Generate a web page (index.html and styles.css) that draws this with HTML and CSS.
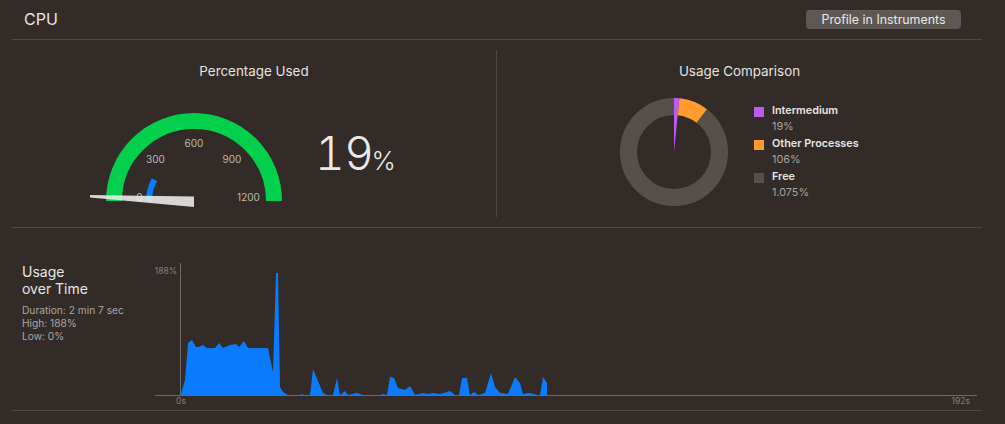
FILE: index.html
```html
<!DOCTYPE html>
<html>
<head>
<meta charset="utf-8">
<link rel="stylesheet" href="styles.css">
</head>
<body>
<div class="panel">
  <header class="head">
    <h1 class="title">CPU</h1>
    <button class="btn">Profile in Instruments</button>
  </header>

  <section class="top">
    <div class="col col-left">
      <h2 class="sub">Percentage Used</h2>
      <div class="gauge-row">
        <svg class="gauge" width="210" height="112" viewBox="0 0 210 112">
          <path d="M28 101 A80 80 0 0 1 188 101" fill="none" stroke="#02cf4c" stroke-width="16"/>
          <g class="gauge-lbl">
            <text x="53.5" y="97">0</text>
            <text x="69.5" y="59">300</text>
            <text x="108" y="43">600</text>
            <text x="146" y="59">900</text>
            <text x="162.5" y="97">1200</text>
          </g>
          <path d="M63 101 A45 45 0 0 1 68.5 79.6" fill="none" stroke="#0a7bff" stroke-width="6"/>
          <polygon points="4,95 108,96.5 108,107 4,97.5" fill="rgba(238,238,238,0.88)"/>
        </svg>
        <div class="pct">19<span class="pct-sign">%</span></div>
      </div>
    </div>
    <div class="divider"></div>
    <div class="col col-right">
      <h2 class="sub">Usage Comparison</h2>
      <div class="donut-row">
        <svg class="donut" width="120" height="120" viewBox="0 0 120 120">
          <circle cx="60" cy="60" r="45.5" fill="none" stroke="#55504c" stroke-width="17"/>
          <path d="M65.36 6.27 A54 54 0 0 1 92.87 17.16 L82.53 30.64 A37 37 0 0 0 63.67 23.18 Z" fill="#ff9a2b"/>
          <path d="M60 60 L60 6 A54 54 0 0 1 65.36 6.27 Z" fill="#bf5af2"/>
        </svg>
        <ul class="legend">
          <li class="item"><span class="sw sw-purple"></span><div><div class="lbl">Intermedium</div><div class="val">19%</div></div></li>
          <li class="item"><span class="sw sw-orange"></span><div><div class="lbl">Other Processes</div><div class="val">106%</div></div></li>
          <li class="item"><span class="sw sw-gray"></span><div><div class="lbl">Free</div><div class="val">1.075%</div></div></li>
        </ul>
      </div>
    </div>
  </section>

  <section class="time">
    <div class="info">
      <div class="info-title">Usage<br>over Time</div>
      <div class="info-meta">Duration: 2 min 7 sec<br>High: 188%<br>Low: 0%</div>
    </div>
    <svg class="chart" width="835" height="148" viewBox="150 260 835 148">
      <path fill="#0a7bff" d="M180.7 395 L185 380 L188 343 L192 340 L196 347 L199 347 L203 345 L207 348 L215 348 L219 343 L223 348 L230 345 L236 344 L239 347 L244 341 L248 348 L268 348 L273 372 L276 273 L278 273 L280 387 L283 392 L288 395 L300 395 L302 394 L304 395 L310 395 L313 369 L323 393 L327 395 L333 395 L337 378 L340 395 L345 391 L348 395 L357 393 L363 395 L380 395 L383 394 L387 395 L390 377 L394 378 L398 388 L405 390 L410 386 L415 395 L423 393 L428 394 L433 393 L440 394 L450 391 L455 395 L459 395 L462 378 L467 378 L470 395 L474 392 L478 395 L485 393 L491 373 L495 387 L500 393 L508 394 L515 377 L520 383 L523 394 L530 393 L537 395 L540 395 L543 377 L547 383 L547 395 Z"/>
      <line x1="180.5" y1="263" x2="180.5" y2="395" stroke="#6f6965" stroke-width="1"/>
      <line x1="155" y1="395.5" x2="977" y2="395.5" stroke="#6f6965" stroke-width="1"/>
      <g class="axis-lbl">
        <text x="177" y="271" text-anchor="end">188%</text>
        <text x="181" y="401" text-anchor="middle">0s</text>
        <text x="970" y="401" text-anchor="end">192s</text>
      </g>
    </svg>
  </section>
</div>
</body>
</html>
```

FILE: styles.css
```css
* { box-sizing: border-box; }

html, body {
  margin: 0;
  padding: 0;
  background: #322b27;
  width: 1005px;
  height: 424px;
  overflow: hidden;
  font-family: "Inter", "Liberation Sans", sans-serif;
  color: #e6e3e0;
}

.panel {
  margin: 0 23px 0 12px;
}

.head {
  height: 40px;
  border-bottom: 1px solid #4e4843;
  display: flex;
  align-items: center;
  justify-content: space-between;
  padding: 0 21px 1px 12px;
}

.title {
  margin: 0;
  font-size: 16px;
  font-weight: 400;
  line-height: 20px;
  color: #e8e6e4;
}

.btn {
  margin: 0;
  height: 19px;
  width: 155px;
  padding: 0;
  border: none;
  border-radius: 4px;
  background: #5d5854;
  color: #ebe9e7;
  font-family: "Inter", "Liberation Sans", sans-serif;
  font-size: 12.4px;
  line-height: 19px;
  text-align: center;
  box-shadow: 0 0.5px 0 rgba(255,255,255,0.08) inset;
}

.top {
  display: flex;
  height: 188px;
  border-bottom: 1px solid #4e4843;
}

.col {
  flex: 1;
  padding-top: 23px;
}

.col-left { width: 484px; flex: 0 0 484px; }
.col-right { flex: 1; }

.divider {
  width: 1px;
  flex: 0 0 1px;
  height: 167px;
  margin-top: 10px;
  background: #4e4843;
}

.sub {
  margin: 0;
  text-align: center;
  font-size: 13.4px;
  font-weight: 400;
  line-height: 16px;
  color: #e6e3e0;
}

.gauge-row {
  display: flex;
  align-items: flex-start;
  margin-top: 21px;
  padding-left: 74px;
}

.gauge { display: block; flex: none; }

.gauge-lbl text {
  font-family: "Inter", "Liberation Sans", sans-serif;
  font-size: 10px;
  fill: #bdb8b3;
  text-anchor: middle;
  dominant-baseline: central;
}

.pct {
  margin-left: 19px;
  margin-top: 30px;
  font-size: 46px;
  line-height: 46px;
  font-weight: 300;
  color: #ebe9e7;
  font-variant-numeric: tabular-nums;
  letter-spacing: -0.5px;
}

.pct-sign {
  font-size: 26px;
  margin-left: -2px;
  letter-spacing: 0;
}

.donut-row {
  display: flex;
  align-items: flex-start;
  margin-top: 13px;
  padding-left: 117px;
}

.donut { display: block; flex: none; }

.legend {
  list-style: none;
  margin: 11px 0 0 20px;
  padding: 0;
}

.item {
  display: flex;
  align-items: flex-start;
  height: 33px;
}

.sw {
  width: 10px;
  height: 10px;
  margin-top: 4px;
  margin-right: 8px;
  flex: none;
}

.sw-purple { background: #bf5af2; }
.sw-orange { background: #ff9a2b; }
.sw-gray { background: #55504c; }

.lbl {
  font-size: 10.8px;
  font-weight: 600;
  line-height: 16px;
  color: #e8e6e4;
}

.val {
  font-size: 10.8px;
  line-height: 16px;
  color: #a8a39f;
}

.time {
  display: flex;
  height: 183px;
  border-bottom: 1px solid #4e4843;
}

.info {
  width: 138px;
  flex: none;
  padding: 35px 0 0 10px;
}

.info-title {
  font-size: 14px;
  line-height: 17px;
  color: #e8e6e4;
}

.info-meta {
  margin-top: 7px;
  font-size: 10.2px;
  line-height: 13px;
  color: #aaa5a1;
}

.chart {
  display: block;
  flex: none;
  margin-top: 32px;
}

.axis-lbl text {
  font-family: "Inter", "Liberation Sans", sans-serif;
  font-size: 8.5px;
  fill: #85807b;
  dominant-baseline: central;
}
```
